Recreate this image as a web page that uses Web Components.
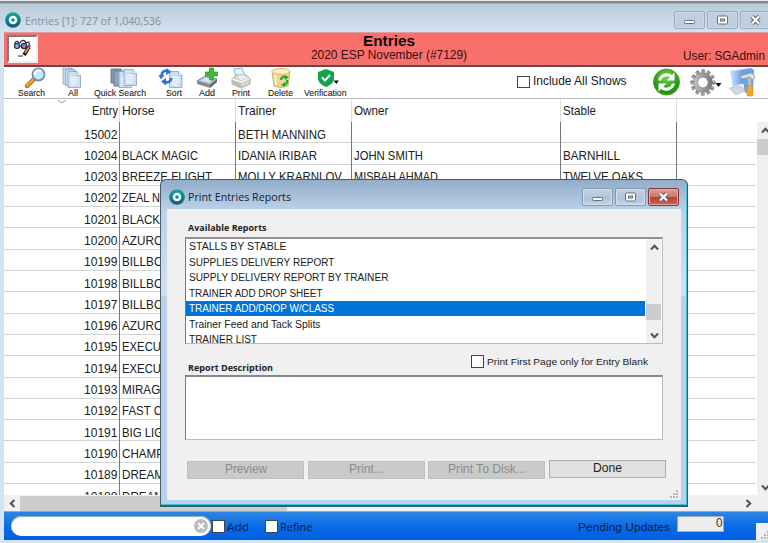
<!DOCTYPE html>
<html lang="en"><head><meta charset="utf-8"><title>Entries</title>
<style>html,body{margin:0;width:768px;height:543px;overflow:hidden;font-family:"Liberation Sans",Arial,sans-serif;color:#202020}</style></head>
<body><entries-window></entries-window>
<script>
function define(name, html, setup) {
  const tpl = document.createElement('template');
  tpl.innerHTML = html;
  customElements.define(name, class extends HTMLElement {
    constructor() { super(); this.attachShadow({mode: 'open'}).append(tpl.content.cloneNode(true)); }
    connectedCallback() { if (setup) setup(this, this.shadowRoot); }
  });
}
// Label condensed or widened to the width given in "w", at the font size given in "s".
define('fit-text', `<style>:host{display:block;flex:none;white-space:nowrap;line-height:1.15}span{display:inline-block;transform-origin:0 50%}</style><span><slot></slot></span>`, (el, root) => {
  const s = root.querySelector('span'), w = +el.getAttribute('w');
  if (el.hasAttribute('s')) el.style.fontSize = el.getAttribute('s') + 'px';
  if (w) { const n = s.getBoundingClientRect().width; el.style.width = w + 'px'; if (n) s.style.transform = `scaleX(${w / n})`; }
});
define('app-logo', `<style>:host{display:block;width:16px;height:16px;flex:none}svg{display:block}</style>
<svg width="16" height="16"><defs><linearGradient id="g" x2="0" y2="1"><stop stop-color="#14a99d"/><stop offset="1" stop-color="#075d7b"/></linearGradient></defs><circle cx="8" cy="8" r="7.8" fill="url(#g)"/><circle cx="8" cy="8" r="3" fill="none" stroke="#fff" stroke-width="2.6"/></svg>`);
define('window-button', `<style>:host{display:block;box-sizing:border-box;flex:none;width:31px;height:18px;border:1px solid #8599b3;border-radius:2px;background:linear-gradient(#c3d2e3,#b4c6da 48%,#acc0d6 50%,#c3d5e7);box-shadow:inset 0 0 0 1px #d3e0ed}
:host([tone=pale]){border-color:#9aabc2;background:#bfcfdf;box-shadow:inset 0 0 0 1px #cad8e6}
:host([tone=red]){border-color:#7d3a42;background:linear-gradient(#dda096,#ce796a 47%,#bb3e29 50%,#cc6653);box-shadow:inset 0 0 0 1px #e3a79c}svg{display:block}</style><svg width="29" height="16"></svg>`, (el, root) => {
  root.querySelector('svg').innerHTML = {
    min: '<rect x="9.5" y="8.5" width="10" height="3" rx=".8" fill="#fff" stroke="#666d7a"/>',
    max: '<rect x="9.5" y="4" width="10" height="8" rx="1" fill="#fff" stroke="#666d7a"/><rect x="12.5" y="7" width="4" height="2" fill="#b6c8db" stroke="#666d7a"/>',
    close: '<g fill="none"><path d="M11 4.5l7 7M18 4.5l-7 7" stroke="#5f6472" stroke-width="4.4"/><path d="M11 4.5l7 7M18 4.5l-7 7" stroke="#fff" stroke-width="2.2"/></g>'
  }[el.getAttribute('kind')];
});
define('check-box', `<style>:host{display:block;flex:none;box-sizing:border-box;width:13px;height:13px;border:1px solid #444;background:#fff}</style>`);
define('scroll-arrow', `<style>:host{display:flex;align-items:center;justify-content:center;flex:none;width:16px;height:16px}</style><svg width="9" height="9"><path fill="none" stroke="#505050" stroke-width="2" d="M1 6.5l3.5-3.7L8 6.5"/></svg>`, (el, root) => {
  root.querySelector('svg').style.transform = `rotate(${({up: 0, right: 90, down: 180, left: 270})[el.getAttribute('dir')]}deg)`;
});
define('size-grip', `<style>:host{display:block;width:9px;height:9px}svg{display:block}</style><svg width="9" height="9" fill="#b4b4b4"><path d="M6 0h2v2H6zM3 3h2v2H3zM6 3h2v2H6zM0 6h2v2H0zM3 6h2v2H3zM6 6h2v2H6z"/></svg>`);

const docs = (x, y) => `<g transform="translate(${x} ${y})"><path d="M0 0h9l3.500 4v12H0z" fill="#cfdff3" stroke="#86a0c6" stroke-width=".8"/><path d="M9 0v4h3.500" fill="#fff" stroke="#86a0c6" stroke-width=".7"/><path d="M2.500 6h7M2.500 8.300h7M2.500 10.600h7M2.500 12.900h5" stroke="#fff" stroke-width="1"/></g>`;
const icons = {
  search: '<path d="M2 18l8-8" stroke="#83551d" stroke-width="4.200" stroke-linecap="round"/><path d="M2 17.700l7-7" stroke="#efa02e" stroke-width="3" stroke-linecap="round"/><circle cx="13.500" cy="6.500" r="6" fill="#c8e7ff" stroke="#6f8fbb" stroke-width="1.800"/><path d="M9.500 6.500a4.200 4.200 0 0 1 7-3" stroke="#fff" stroke-width="2" fill="none"/>',
  all: docs(0, 0) + docs(2.5, 1.5) + docs(5, 3.5),
  quick: `<g><path d="M1 1h10v14H1z" fill="#8698ae" stroke="#68798e"/><path d="M4 3h11v15H4z" fill="#93a4b9" stroke="#6a7e99"/></g>` + docs(9, 3.5) + docs(14, 1.5),
  sort: docs(9.5, 3.5) + '<g fill="none" stroke="#2f70df" stroke-width="2.600"><path d="M1.500 8c0-4 3-6 6-5"/><path d="M11.500 10c-1 4-4 5-6 4"/></g><path d="M6.500 0l5 4-5.500 3zM-1.500 7h6L1 11.500zM6 10v7.500L1 13.500z" fill="#2f70df"/>',
  add: '<path d="M0 13l8-5 12 3-7 6z" fill="#b7c0ca" stroke="#68737f" stroke-width=".8"/><path d="M0 13l13 4v3L0 16z" fill="#828d99"/><path d="M13 17l7-6v3l-7 6z" fill="#5c6672"/><path d="M4 12.500l5-3 7 2-4 3z" fill="#dce6ef"/><path d="M12.500 0h4v4h4v4h-4v4h-4V8h-4V4h4z" fill="#3fba38" stroke="#269226" stroke-width=".7"/>',
  print: '<path d="M3 1l8-1 3 9H5z" fill="#e5f4ff" stroke="#8eb3d4"/><path d="M1 11l4-4h10l4 3v6l-9 4-9-4z" fill="#d5d5d2" stroke="#989894" stroke-width=".8"/><path d="M1 12l9 3v5l-9-4z" fill="#bdbdb9"/><path d="M1 11l9 3 9-4" fill="none" stroke="#fff"/><path d="M5.500 8l8-1 3 2.500-7 2.500z" fill="#eeeeea"/>',
  trash: '<path d="M1 3l2 15q7 3 14 0l2-15z" fill="#eed590" stroke="#d2b66e"/><ellipse cx="10" cy="3.500" rx="9" ry="3" fill="#fbeec2" stroke="#d3b96f"/><path d="M4 7l1 10" stroke="#fff4cc" stroke-width="2"/><g fill="none" stroke="#2fa32d" stroke-width="2.200"><path d="M10 12c0-3 3-4 5-3M16 12c1 3-1 5-4 5"/></g><path d="M13 7l5 2-4 3zM14 14v5l-4-2z" fill="#2fa32d"/>',
  shield: '<path d="M10 1l8 3v6c0 4-3 7-8 9-5-2-8-5-8-9V4z" fill="#10a44a"/><path d="M6 9.500l3 3 5-5.500" fill="none" stroke="#fff" stroke-width="2"/><path d="M17.500 12.500h5.500l-2.700 3.500z" fill="#111"/>'
};
define('tool-item', `<style>:host{display:flex;flex-direction:column;align-items:center;flex:none;height:31px}svg{display:block;overflow:visible;position:relative}fit-text{margin-top:.5px;-webkit-text-stroke:.1px #333}</style><svg height="20.500"></svg><fit-text></fit-text>`, (el, root) => {
  const k = el.getAttribute('icon'), svg = root.querySelector('svg'), t = root.querySelector('fit-text');
  svg.setAttribute('width', {quick: 27, sort: 22}[k] || 20);
  svg.style.left = (el.getAttribute('shift') || 0) + 'px';
  svg.innerHTML = icons[k];
  const x = document.createElement('fit-text');
  x.setAttribute('s', '8.3'); x.setAttribute('w', el.getAttribute('w')); x.textContent = el.getAttribute('label');
  t.replaceWith(x);
  el.style.width = el.getAttribute('box') + 'px';
});
const teeth = Array.from({length: 12}, (_, i) => `<rect x="11.700" y="0" width="3.600" height="5" rx=".8" transform="rotate(${i * 30} 13.500 13.500)"/>`).join('');
define('tool-bar', `<style>:host{display:flex;height:31px;box-sizing:border-box;background:#fff;border-bottom:1px solid #b9bbc2;padding:1px 0 0 4px;margin:0 0 0 4px;flex:none;height:32px}
tool-item:first-of-type{margin-left:-4px}.g{flex:1}check-box{margin:7.500px 3px 0 0;width:12.5px;height:12.500px}.inc{margin-top:7px;margin-right:27px}.icons{display:block;flex:none;margin-top:-1px}</style>
<tool-item icon="search" shift="3.5" label="Search" w="27" box="55"></tool-item><tool-item icon="all" label="All" w="10" box="28"></tool-item><tool-item icon="quick" shift="3" label="Quick Search" w="52" box="66"></tool-item><tool-item icon="sort" shift="-3" label="Sort" w="16" box="41"></tool-item><tool-item icon="add" label="Add" w="16" box="26"></tool-item><tool-item icon="print" label="Print" w="18" box="42"></tool-item><tool-item icon="trash" label="Delete" w="25" box="37"></tool-item><tool-item icon="shield" label="Verification" w="42.500" box="53"></tool-item>
<span class="g"></span><check-box></check-box><fit-text class="inc" s="12" w="93.500">Include All Shows</fit-text>
<svg class="icons" width="115" height="31"><defs><radialGradient id="gr" cy=".3"><stop stop-color="#7bd44a"/><stop offset="1" stop-color="#239815"/></radialGradient><linearGradient id="gg"><stop stop-color="#c4c4c4"/><stop offset="1" stop-color="#757575"/></linearGradient><linearGradient id="mo"><stop stop-color="#c5e5ff"/><stop offset="1" stop-color="#2e78d6"/></linearGradient></defs>
<circle cx="13.500" cy="15" r="13" fill="url(#gr)" stroke="#3b9a1d" stroke-width=".8"/><g fill="none" stroke="#fff" stroke-width="3"><path d="M6.500 13.500a7.500 7.500 0 0 1 12-4"/><path d="M20.500 16.500a7.500 7.500 0 0 1-12 4"/></g><path d="M21.500 5.500v8h-8zM5.500 24.500v-8h8z" fill="#fff"/>
<g transform="translate(37.500 2.500) scale(.92 .96)" fill="url(#gg)" stroke="#777" stroke-width=".5">${teeth}<path fill-rule="evenodd" d="M13.500 3.500a10 10 0 1 0 .01 0zM13.500 8a5.500 5.500 0 1 1-.01 0z"/></g><path d="M62.500 16h6l-3 4z" fill="#111"/>
<path d="M78 4l17-2-1 14-14 3z" fill="url(#mo)" stroke="#bfd4eb" stroke-width="1.200"/><path d="M76.500 21l10-2 8 4-12 5z" fill="#d3d8e0" stroke="#a8b1be" stroke-width=".6"/><path d="M88 3l10-2 3 2-1 20-8 3z" fill="#6ba3e0"/><path d="M87 9l11-3q4 1 4 5l-3 2-2-3-8 2z" fill="#dce1e7" stroke="#8d97a4" stroke-width=".7"/><path d="M94.500 11l3-1 1 10h-3z" fill="#b5bdc8"/><rect x="94" y="19" width="6" height="10" rx="1.500" fill="#f3a82a" stroke="#da861a" stroke-width=".6"/></svg>`);

// Widths of the grid columns: entry, horse, trainer, owner, stable, rest.
const columns = [115, 116, 116, 209, 116, 80];
define('entry-row', `<style>:host{display:flex;box-sizing:border-box;height:21.3px;flex:none;width:752px;border-bottom:1px solid #d2d3d5}
.c{box-sizing:border-box;border-left:1px solid #777;padding:5.500px 0 0 2px;height:21.3px;overflow:hidden;flex:none}.c.num{border:0;display:flex;justify-content:flex-end;padding-right:2px}:host([head]) .c{border-color:#ddd;padding-top:5px}:host([head]){height:23px;border:0}:host([head]) .c.num{padding-right:1px}</style>`, (el, root) => {
  const head = el.hasAttribute('head');
  JSON.parse(el.getAttribute('cells')).forEach((v, i) => {
    const c = document.createElement('div'); c.className = i ? 'c' : 'c num'; c.style.width = columns[i] + 'px';
    if (head) c.style.height = '23px';
    if (v) { const t = document.createElement('fit-text'); t.setAttribute('s', '12.2'); if (v[1]) t.setAttribute('w', v[1]); t.textContent = v[0]; c.append(t); }
    root.append(c);
  });
});
define('entry-table', `<style>:host{display:grid;grid-template-columns:752px 12px;grid-template-rows:23px 373px 16px;height:412px;background:#fff;position:relative;margin-left:4px}.head{grid-column:1/3}.body{overflow:hidden;display:flex;flex-direction:column}.v{background:#efefef;display:flex;flex-direction:column;justify-content:space-between;overflow:hidden;margin-left:1px}.v div{height:16px;background:#cdcdcd;margin-top:1px}.v span{flex:1}.h{grid-column:1/3;background:#f0f0f0;display:flex;align-items:center}.h div{width:267px;height:15px;background:#cdcdcd}.h span{flex:1}.h scroll-arrow:last-child{margin-right:12px}.mark{position:absolute;left:53px;top:0}</style>
<div class="head"></div><div class="body"></div><div class="v"><scroll-arrow dir="up"></scroll-arrow><div></div><span></span><scroll-arrow dir="down"></scroll-arrow></div><div class="h"><scroll-arrow dir="left"></scroll-arrow><div></div><span></span><scroll-arrow dir="right"></scroll-arrow></div><svg class="mark" width="10" height="5"><path d="M1 1l4 3 4-3" fill="none" stroke="#999"/></svg>`, (el, root) => {
  const put = (box, cells, head) => { const r = document.createElement('entry-row'); if (head) r.setAttribute('head', ''); while (cells.length < 6) cells.push(0); r.setAttribute('cells', JSON.stringify(cells)); box.append(r); };
  put(root.querySelector('.head'), [['Entry', 26], ['Horse', 32.5], ['Trainer', 38], ['Owner', 34.5], ['Stable', 33]], true);
  const n = v => [v, 33.5];
  [[n('15002'), 0, ['BETH MANNING', 88]],
   [n('10204'), ['BLACK MAGIC', 76], ['IDANIA IRIBAR', 79], ['JOHN SMITH', 69], ['BARNHILL', 57]],
   [n('10203'), ['BREEZE FLIGHT', 90], ['MOLLY KRARNLOV', 104], ['MISBAH AHMAD', 84], ['TWELVE OAKS', 80]],
   [n('10202'), ['ZEAL N', 38]], [n('10201'), ['BLACK', 38]], [n('10200'), ['AZURO', 41]],
   [n('10199'), ['BILLBO', 41]], [n('10198'), ['BILLBO', 41]], [n('10197'), ['BILLBO', 41]], [n('10196'), ['AZURO', 41]],
   [n('10195'), ['EXECU', 39]], [n('10194'), ['EXECU', 39]], [n('10193'), ['MIRAGE', 46]], [n('10192'), ['FAST C', 40]],
   [n('10191'), ['BIG LIG', 41]], [n('10190'), ['CHAMP', 42]], [n('10189'), ['DREAM', 42]], [n('10188'), ['DREAM', 42]]
  ].forEach(r => put(root.querySelector('.body'), r));
});
define('report-list', `<style>:host{display:flex;box-sizing:border-box;height:107px;border:1px solid #b8bbc0;border-top:2px solid #909194;border-left:1.500px solid #77797d;background:#fff}.l{flex:1;overflow:hidden}.r{height:15.45px;padding:2.400px 0 0 2.500px;box-sizing:border-box;overflow:visible}.sel{background:#0273d8;color:#fff}.s{width:15px;background:#f0f0f0;display:flex;flex-direction:column;justify-content:space-between;margin:0 1px 0 1px}.s div{height:16px;background:#cdcdcd;margin-top:49px}.s span{flex:1}</style><div class="l"></div><div class="s"><scroll-arrow dir="up"></scroll-arrow><div></div><span></span><scroll-arrow dir="down"></scroll-arrow></div>`, (el, root) => {
  [['STALLS BY STABLE', 97.5], ['SUPPLIES DELIVERY REPORT', 145.5], ['SUPPLY DELIVERY REPORT BY TRAINER', 199.5], ['TRAINER ADD DROP SHEET', 133.5], ['TRAINER ADD/DROP W/CLASS', 145], ['Trainer Feed and Tack Splits', 131.5], ['TRAINER LIST', 68]].forEach(([s, w], i) => {
    const r = document.createElement('div'); r.className = i === 4 ? 'r sel' : 'r';
    const t = document.createElement('fit-text'); t.setAttribute('s', '10'); t.setAttribute('w', w); t.textContent = s; r.append(t); root.querySelector('.l').append(r);
  });
});
define('push-button', `<style>:host{display:flex;justify-content:center;align-items:center;box-sizing:border-box;flex:none;width:117px;height:18px;background:#cacaca;border:1px solid #bfbfbf;color:#8b8b8b}:host([active]){background:#e1e1e1;border:1px solid #adadad;color:#222;margin-top:-1px}</style><slot></slot>`);
define('print-dialog', `<style>:host{display:block;box-sizing:border-box;width:528px;height:328px;border:1px solid #4c5a68;border-right-color:#23616e;border-bottom:2px solid #34616b;border-radius:6px 6px 0 0;background:linear-gradient(#92adca,#bbd1e8 30px,#d2e0ef 115px,#b9d1ea 117px);padding:0 6px 6px;box-shadow:inset -1px -1px 0 #41c3d5}
.t{display:flex;height:29px;padding:8px 1px 0 2px;box-sizing:border-box;gap:2px}.t app-logo{margin-top:1px}.t fit-text{margin-left:1px;margin-top:1px;color:#16202d}.t span{flex:1}.b{background:#f0f0f0;height:291px;box-sizing:border-box;padding:12px 18px 0;display:flex;flex-direction:column}.b fit-text.label{font-weight:bold;margin-left:2.500px;height:12px;line-height:13px;font-family:"Open Sans",sans-serif;color:#222}.mid{display:flex;height:31px;box-sizing:border-box;padding-top:11px}.mid .label{margin-top:6px}.mid span{flex:1}.mid check-box{margin-right:3px}.mid .p{margin:.5px 15px 0 0}.ta{height:65px;box-sizing:border-box;background:#fff;border:1px solid #b8bbc0;border-top:2px solid #85878a;border-left:1.500px solid #77797d}.btns{display:flex;margin:21px -5px 0 2px;gap:3.700px}size-grip{align-self:flex-end;margin:11px -16px 0 0}
window-button{margin-top:-.5px}</style>
<div class="t"><app-logo></app-logo><fit-text s="11.4" w="103" style="font-family:'Open Sans',sans-serif;line-height:16px">Print Entries Reports</fit-text><span></span><window-button kind="min"></window-button><window-button kind="max"></window-button><window-button kind="close" tone="red" style="margin-right:1px"></window-button></div>
<div class="b"><fit-text class="label" s="9.2" w="78.500">Available Reports</fit-text><report-list style="margin-top:4px"></report-list>
<div class="mid"><fit-text class="label" s="9.2" w="85">Report Description</fit-text><span></span><check-box></check-box><fit-text class="p" s="9.9" w="161">Print First Page only for Entry Blank</fit-text></div><div class="ta"></div>
<div class="btns"><push-button><fit-text s="12" w="42">Preview</fit-text></push-button><push-button><fit-text s="12" w="35">Print...</fit-text></push-button><push-button><fit-text s="12" w="78">Print To Disk...</fit-text></push-button><push-button active><fit-text s="12" w="29">Done</fit-text></push-button></div><size-grip></size-grip></div>`);
define('status-bar', `<style>:host{display:flex;height:28px;margin-left:4px;border-top:1px solid #9aa9b8;background:linear-gradient(#2b86e4,#0667e4 60%,#0261e2);box-sizing:content-box;color:#06204d;flex:none}.in{width:200px;height:20px;box-sizing:border-box;margin:4px 1px 0 6.500px;border-radius:10px;background:#fff;box-shadow:inset 0 1px 1px #8aa;display:flex;justify-content:flex-end;padding:3px 3px 0 0}check-box{margin:7.500px 2px 0 0}.x{margin-top:7.500px}.sp{flex:1}.n{box-sizing:border-box;width:47px;height:16px;margin:4px 32px 0 7px;background:#eee;border:1px solid #9fa9b5;color:#333;display:flex;justify-content:flex-end;padding:0 1px}.gr{width:12px;height:17px;margin-top:11px;background:#eef2f6;display:flex;align-items:flex-end;justify-content:flex-end}</style>
<div class="in"><svg width="14" height="14"><circle cx="7" cy="7" r="7" fill="#bbb"/><path d="M4 4l6 6M10 4l-6 6" stroke="#fff" stroke-width="1.800"/></svg></div><check-box></check-box><fit-text class="x" s="11.4" w="22" style="margin-right:16px;font-family:'Open Sans',sans-serif;line-height:13px">Add</fit-text><check-box></check-box><fit-text class="x" s="11.4" w="32.500" style="font-family:'Open Sans',sans-serif;line-height:13px;margin-left:0">Refine</fit-text><span class="sp"></span><fit-text class="x" s="11.300" w="92" style="margin-top:8.500px">Pending Updates</fit-text><div class="n"><fit-text s="12" w="6.500">0</fit-text></div><div class="gr"><size-grip style="width:7px;overflow:hidden"></size-grip></div>`);
define('entries-window', `<style>:host{display:flex;flex-direction:column;width:768px;height:543px;position:relative;overflow:hidden;background:#d5e3f1}.t{height:32px;box-sizing:border-box;border-top:1px solid #e4e8e8;background:linear-gradient(#858b90 0,#858b90 2px,#b9cad9 3px,#d4e2ef);display:flex;padding:11px 0 0 5px;gap:2px;flex:none}.t span{flex:1}.t fit-text{margin-left:2px;margin-top:1px;color:#868e96;font-family:"Open Sans",sans-serif;line-height:16px}.t window-button{margin-top:-1px}
.r{height:35px;box-sizing:border-box;margin-left:4px;background:#f96f6c;border-top:1px solid #de9da0;border-bottom:2px solid #65484b;display:grid;grid-template-columns:1fr auto 1fr;flex:none;color:#32100f}.ic{width:31px;height:28px;box-sizing:border-box;margin:2px 0 0 3px;border:2px solid #eee;border-top-color:#8b7777;border-left-color:#8b7777;background:#fff}.m{display:flex;flex-direction:column;align-items:center;width:158px;margin-left:5px;margin-right:-1px}.m fit-text:first-child{font-weight:bold;color:#100505;margin-top:0}.u{display:flex;justify-content:flex-end;padding:16.500px 3px 0 0}print-dialog{position:absolute;left:160px;top:179px}</style>
<div class="t"><app-logo></app-logo><fit-text s="11.4" w="136">Entries [1]: 727 of 1,040,536</fit-text><span></span><window-button kind="min" tone="pale"></window-button><window-button kind="max" tone="pale"></window-button><window-button kind="close" tone="pale" style="margin-right:-3px"></window-button></div>
<div class="r"><div class="ic"><svg width="27" height="24" fill="none"><g stroke="#222" stroke-width="1.100" transform="translate(-1 -1)"><circle cx="9" cy="10" r="2.500" fill="#9aa5ee"/><circle cx="16" cy="10" r="2.700" fill="#7783d9"/><path d="M6.500 8c1-4 4-3 5 0M12 7c2-4 5-3 6 0M18 7q4-3 3 3M11.500 10h2"/></g><path d="M20 10l-5 8" stroke="#101010" stroke-width="3.600"/><path d="M20 10l-4 6" stroke="#ec884c" stroke-width="2"/><path d="M20.500 8l-1 2.500" stroke="#9c3d79" stroke-width="3"/><path d="M9 19h5" stroke="#222"/></svg></div><div class="m"><fit-text s="14.800" w="52">Entries</fit-text><fit-text s="12" w="156" style="margin-top:-1.500px">2020 ESP November (#7129)</fit-text></div><div class="u"><fit-text s="12" w="82">User: SGAdmin</fit-text></div></div>
<tool-bar></tool-bar><entry-table></entry-table><status-bar></status-bar><print-dialog></print-dialog>`);
</script></body></html>
